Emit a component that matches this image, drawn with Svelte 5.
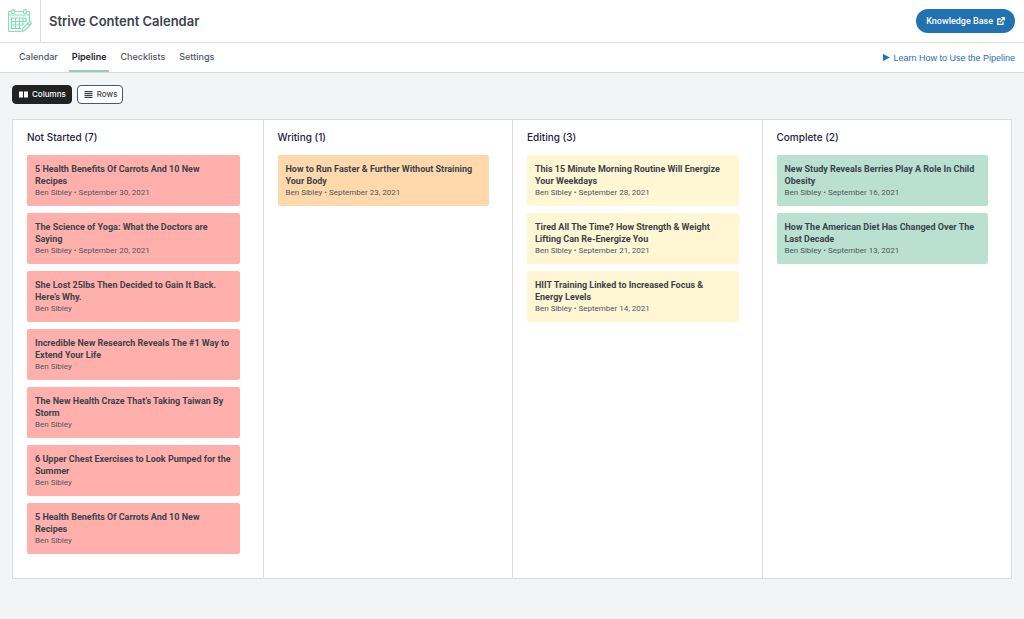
<script>
  let view = $state('columns');

  const tabs = ['Calendar', 'Pipeline', 'Checklists', 'Settings'];
  const author = 'Ben Sibley';

  const columns = [
    {
      name: 'Not Started',
      status: 'not-started',
      posts: [
        { title: '5 Health Benefits Of Carrots And 10 New Recipes', date: 'September 30, 2021' },
        { title: 'The Science of Yoga: What the Doctors are Saying', date: 'September 20, 2021' },
        { title: 'She Lost 25lbs Then Decided to Gain It Back. Here’s Why.' },
        { title: 'Incredible New Research Reveals The #1 Way to Extend Your Life' },
        { title: 'The New Health Craze That’s Taking Taiwan By Storm' },
        { title: '6 Upper Chest Exercises to Look Pumped for the Summer' },
        { title: '5 Health Benefits Of Carrots And 10 New Recipes' }
      ]
    },
    {
      name: 'Writing',
      status: 'writing',
      posts: [
        { title: 'How to Run Faster & Further Without Straining Your Body', date: 'September 23, 2021' }
      ]
    },
    {
      name: 'Editing',
      status: 'editing',
      posts: [
        { title: 'This 15 Minute Morning Routine Will Energize Your Weekdays', date: 'September 28, 2021' },
        { title: 'Tired All The Time? How Strength & Weight Lifting Can Re-Energize You', date: 'September 21, 2021' },
        { title: 'HIIT Training Linked to Increased Focus & Energy Levels', date: 'September 14, 2021' }
      ]
    },
    {
      name: 'Complete',
      status: 'complete',
      posts: [
        { title: 'New Study Reveals Berries Play A Role In Child Obesity', date: 'September 16, 2021' },
        { title: 'How The American Diet Has Changed Over The Last Decade', date: 'September 13, 2021' }
      ]
    }
  ];
</script>

<header>
  <div class="logo">
    <svg viewBox="0 0 24 24" width="24" height="24" fill="none" stroke="#83dfb5" stroke-width="1.2">
      <path d="M3 2.5H1.5a1 1 0 0 0-1 1v18a1 1 0 0 0 1 1H13M7 2.5h8M19 2.5h1.5a1 1 0 0 1 1 1V12M.5 6h21" />
      <rect x="3.5" y=".7" width="3" height="4" rx="1.5" />
      <rect x="15.500" y=".7" width="3" height="4" rx="1.5" />
      <path d="M7.500 9h10.500v3.500h-14.500V9h4v10.500h-4v-7M3.500 16h11.500M11.500 9v10.500h-4M15 9v7M11.500 19.500h1.500" />
      <path d="M14 22.500l1-3.500 6-6q1-.8 1.900.1t.1 1.900l-6 6.200zM19.500 14.500l2 2" />
    </svg>
  </div>
  <h1>Strive Content Calendar</h1>
  <a class="knowledge" href="#knowledge-base">
    Knowledge Base
    <svg viewBox="0 0 10 10" width="8" height="8" fill="none" stroke="currentColor" stroke-width="1.6">
      <path d="M4.500 2.500H1v6.700h6.500V6M3.500 6.500L9 1M5.500.8h3.700v3.700" />
    </svg>
  </a>
</header>

<nav>
  {#each tabs as tab}
    <a class="tab" class:active={tab === 'Pipeline'} href="#{tab.toLowerCase()}">{tab}</a>
  {/each}
  <a class="learn" href="#learn">
    <svg viewBox="0 0 7 7" width="7" height="7"><path d="M0 0l7 3.500L0 7z" fill="currentColor" /></svg>
    Learn How to Use the Pipeline
  </a>
</nav>

<main>
  <div class="views">
    <button class:selected={view === 'columns'} onclick={() => (view = 'columns')}>
      <svg viewBox="0 0 9 7" width="9" height="7"><path d="M0 .5h4v6H0zM5 .5h4v6H5z" fill="currentColor" /></svg>
      Columns
    </button>
    <button class:selected={view === 'rows'} onclick={() => (view = 'rows')}>
      <svg viewBox="0 0 9 7" width="9" height="7"><path d="M.5 0h8v1.200h-8zM.5 2h8v1.200h-8zM.5 4h8v1.200h-8zM.5 6h8v1h-8z" fill="currentColor" /></svg>
      Rows
    </button>
  </div>

  <div class="board" class:stacked={view === 'rows'}>
    {#each columns as column}
      <section class={column.status}>
        <h2>{column.name} ({column.posts.length})</h2>
        <ul>
          {#each column.posts as post}
            <li>
              <h3>{post.title}</h3>
              <p>{author}{post.date ? ` • ${post.date}` : ''}</p>
            </li>
          {/each}
        </ul>
      </section>
    {/each}
  </div>
</main>

<style>
  :global(body) {
    margin: 0;
    background: #f3f4f6;
    color: #3c434a;
    font-family: Inter, "Liberation Sans", sans-serif;
  }

  h1, h2, h3, p, ul {
    margin: 0;
    padding: 0;
  }

  a {
    text-decoration: none;
  }

  header, nav {
    display: flex;
    background: #fff;
    border-bottom: 1px solid #dcdcde;
  }

  header {
    align-items: center;
    height: 42px;
    padding-right: 9px;
  }

  .logo {
    display: flex;
    align-items: center;
    align-self: stretch;
    padding: 0 8px;
    border-right: 1px solid #dcdcde;
  }

  h1 {
    flex: 1;
    margin-left: 8px;
    font-size: 13px;
    font-weight: 600;
  }

  .knowledge {
    display: flex;
    align-items: center;
    gap: 4px;
    height: 24px;
    padding: 0 10px;
    border-radius: 12px;
    background: #2271b1;
    color: #fff;
    font-family: Roboto, sans-serif;
    font-size: 9px;
    font-weight: 500;
  }

  nav {
    gap: 8px;
    height: 29px;
    padding: 0 9px 0 16px;
    font-size: 9px;
    line-height: 28px;
  }

  .tab {
    box-sizing: border-box;
    padding: 0 3px;
    color: #50575e;
    font-weight: 500;
  }

  .tab.active {
    border-bottom: 2px solid #8fd3b6;
    color: #1d2327;
    font-weight: 600;
  }

  .learn {
    display: flex;
    align-items: center;
    gap: 3px;
    margin-left: auto;
    color: #2271b1;
    font-family: "Liberation Sans", sans-serif;
  }

  main {
    padding: 12px 12px 40px;
  }

  .views {
    display: flex;
    gap: 5px;
    margin-bottom: 15px;
  }

  button {
    display: flex;
    align-items: center;
    gap: 4px;
    height: 19px;
    padding: 0 5px 1px 6px;
    border: 1px solid #50575e;
    border-radius: 4px;
    background: #fff;
    color: #3c434a;
    font-family: inherit;
    font-size: 8px;
    font-weight: 500;
  }

  button.selected {
    border-color: #222;
    background: #222;
    color: #fff;
  }

  .board {
    display: grid;
    grid-template-columns: repeat(4, 1fr);
    background: #fff;
    border: 1px solid #dcdcde;
  }

  .board.stacked {
    grid-template-columns: 1fr;
  }

  section {
    padding: 10px 23px 24px 14px;
  }

  section + section {
    border-left: 1px solid #dcdcde;
  }

  h2 {
    margin-bottom: 11px;
    color: #23233f;
    font-size: 10px;
    font-weight: 500;
    line-height: 14px;
  }

  ul {
    display: grid;
    gap: 7px;
    list-style: none;
  }

  li {
    padding: 8px;
    border-radius: 2px;
    font-family: Roboto, sans-serif;
  }

  h3 {
    font-size: 9px;
    font-weight: 700;
    line-height: 12px;
  }

  p {
    color: #50575e;
    font-size: 8px;
    line-height: 11px;
  }

  .not-started li {
    background: #ffb0ad;
  }

  .writing li {
    background: #ffd9ac;
  }

  .editing li {
    background: #fff6d4;
  }

  .complete li {
    background: #b9e0d0;
  }
</style>
